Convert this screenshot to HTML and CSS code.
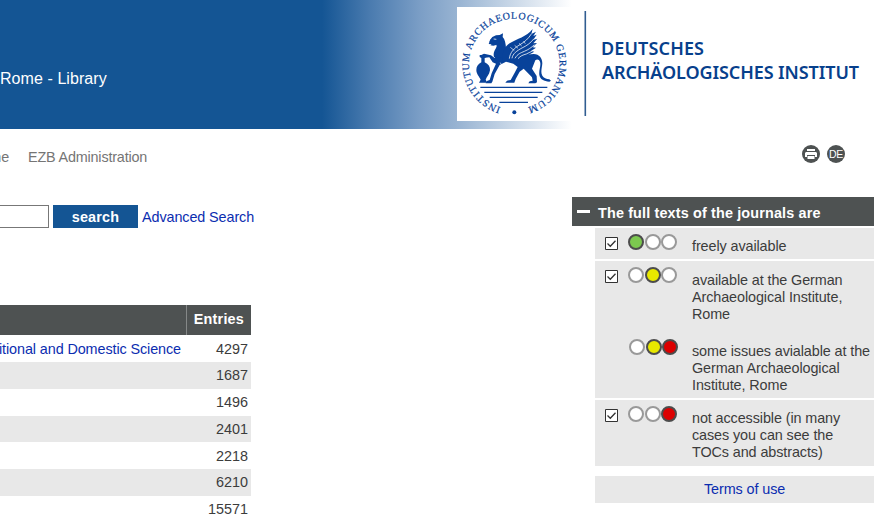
FILE: index.html
```html
<!DOCTYPE html>
<html lang="en">
<head>
<meta charset="utf-8">
<title>Rome - Library</title>
<link rel="stylesheet" href="styles.css">
</head>
<body>
<header class="banner">
  <h1 class="library">Rome - Library</h1>
  <svg class="logo" viewBox="0 0 417 114" role="img" aria-label="Deutsches Archäologisches Institut">
    <rect width="417" height="114" fill="#fff"/>
    <g transform="scale(.33333) translate(-21 -21)" fill="#08429a" stroke="none">
      <path id="ring" fill="none" d="M193 328a136 136 0 0 1 0-272a136 136 0 0 1 0 272"/>
      <text class="seal-text"><textPath href="#ring" startOffset="41" textLength="772">INSTITUTUM ARCHAEOLOGICUM GERMANICUM</textPath></text>
      <circle cx="193" cy="337" r="6"/>
      <path d="M89 165h20v6l-5 3v13c11 5 17 13 16 24-2 13-10 20-13 28l5 9H87l5-9c-4-9-13-17-13-29 0-10 5-18 15-23v-13l-5-3z"/>
      <path d="M118 127l5-10 8-3 14-2 9-5-1 12c9 8 9 19 14 28l13 14 25 4c18 2 31-3 46-3 17 1 26 12 26 28-1 14-6 27 0 37 4 7 12 10 21 11l5 4-5 3c-16-1-28-7-30-20-2-15 6-29 2-40-3-8-10-8-14-4l-10 25 14 22 1 19-5 3h-21l4-6 9-2-2-10-25-26-12 9-12 22-4 11h-27l5-6 11-2 12-22 9-17-13-10-22-6-19 10-15 27-7 23-3 5h-17l4-7 8-3 6-20 13-29-10-4-10-15-13 1-7-5-4 3v-6l8-4 21 5 11 8c2-10 8-14 10-22l-3-18-11 3-9-1 4-3-9-1z"/>
      <path d="M120 120l7-9 11-5 11-1 10-5-1 11c7 7 9 20 10 32l-6 32-30-4c-4-14 5-22 8-32l-3-14-11 3-8-1z"/>
      <path d="M157 185c-2-24 6-45 22-55 22-14 50-19 69-43l-4 15 14-7-8 13 10-4-10 15 12-3-12 14 11-1-13 13 10 1-15 10 10 2-17 9 8 4-19 7c-17 4-26 2-34-5l-17 9z"/>
      <g fill="none" stroke="#fff" stroke-width="2.3">
        <path d="M178 176c2-18 14-32 32-42 15-9 25-18 34-32M186 175c2-14 15-23 30-31 14-7 25-14 36-28M195 175c8-14 17-16 28-21 12-5 21-11 30-20M204 176c8-9 15-11 25-14l18-9M151 188c2 5 5 7 9 9"/>
        <path d="M181 142l12 10M194 136l10 9M207 130l8 8M220 124l6 7" stroke-width="2"/>
        <path d="M131 117l8 1"/>
      </g>
      <path fill="none" stroke="#08429a" stroke-width="4" d="M91 262h201M103 277h174M119 292h144M148 307h86"/>
    </g>
    <path d="M128.3 4v105" stroke="#315d91" stroke-width="1.6"/>
    <g class="institute">
      <text x="144" y="48" textLength="103">DEUTSCHES</text>
      <text x="145" y="72" textLength="257">ARCHÄOLOGISCHES INSTITUT</text>
    </g>
  </svg>
</header>

<nav class="nav">
  <span class="nav-home">Home</span>
  <span>EZB Administration</span>
  <span class="tools">
    <svg width="18" height="18" viewBox="0 0 18 18" aria-label="Print">
      <circle cx="9" cy="9" r="9" fill="#4e5252"/>
      <path d="M5 4h8v2H5zM4 7h10l1 1v4h-2v-2H5v2H3V8zM5.500 11h7v3h-7z" fill="#fff"/>
    </svg>
    <span class="language">DE</span>
  </span>
</nav>

<main class="main">
  <section class="browse">
    <form class="search">
      <input class="query" type="text" aria-label="Search">
      <button class="submit" type="button">search</button>
      <a class="advanced" href="#">Advanced Search</a>
    </form>
    <div class="table">
      <div class="row head"><span class="subject"></span><span class="count">Entries</span></div>
      <div class="row"><a class="subject" href="#">Nutritional and Domestic Science</a><span class="count">4297</span></div>
      <div class="row"><span class="subject"></span><span class="count">1687</span></div>
      <div class="row"><span class="subject"></span><span class="count">1496</span></div>
      <div class="row"><span class="subject"></span><span class="count">2401</span></div>
      <div class="row"><span class="subject"></span><span class="count">2218</span></div>
      <div class="row"><span class="subject"></span><span class="count">6210</span></div>
      <div class="row"><span class="subject"></span><span class="count">15571</span></div>
    </div>
  </section>

  <aside class="access">
    <h2 class="access-title"><span class="minus"></span>The full texts of the journals are</h2>
    <div class="group free">
      <div class="option">
        <svg class="check" viewBox="0 0 13 13"><path d="M.5.5h12v12H.5z" fill="#fff" stroke="#333"/><path d="M2.500 6.500l2.800 2.800 5.200-5.600" fill="none" stroke="#333" stroke-width="1.300"/></svg>
        <span class="lights"><i class="light green"></i><i class="light"></i><i class="light"></i></span>
        <span class="label">freely available</span>
      </div>
    </div>
    <div class="group licensed">
      <div class="option">
        <svg class="check" viewBox="0 0 13 13"><path d="M.5.5h12v12H.5z" fill="#fff" stroke="#333"/><path d="M2.500 6.500l2.800 2.800 5.200-5.600" fill="none" stroke="#333" stroke-width="1.300"/></svg>
        <span class="lights"><i class="light"></i><i class="light yellow"></i><i class="light"></i></span>
        <span class="label">available at the German<br>Archaeological Institute,<br>Rome</span>
      </div>
      <div class="option partial">
        <span class="check"></span>
        <span class="lights"><i class="light"></i><i class="light yellow"></i><i class="light red"></i></span>
        <span class="label">some issues avialable at the<br>German Archaeological<br>Institute, Rome</span>
      </div>
    </div>
    <div class="group closed">
      <div class="option">
        <svg class="check" viewBox="0 0 13 13"><path d="M.5.5h12v12H.5z" fill="#fff" stroke="#333"/><path d="M2.500 6.500l2.800 2.800 5.200-5.600" fill="none" stroke="#333" stroke-width="1.300"/></svg>
        <span class="lights"><i class="light"></i><i class="light"></i><i class="light red"></i></span>
        <span class="label">not accessible (in many<br>cases you can see the<br>TOCs and abstracts)</span>
      </div>
    </div>
    <a class="terms" href="#">Terms of use</a>
  </aside>
</main>
</body>
</html>
```
FILE: styles.css
```css
* { box-sizing: border-box; }
body {
  margin: 0;
  width: 874px;
  height: 520px;
  overflow: hidden;
  background: #fff;
  color: #3c3c3c;
  font: 14.4px/17px "Liberation Sans", Arial, sans-serif;
  letter-spacing: -.1px;
}
a { color: #0b2db0; text-decoration: none; }

.banner {
  display: flex;
  justify-content: space-between;
  height: 129px;
  padding-top: 7px;
  background: linear-gradient(90deg, #145594 322px, #4a7baf 370px, #7b9ec6 420px, #9ab5d3 460px, #fff 572px);
}
.library {
  margin: 63px 0 0;
  color: #fff;
  font-size: 16px;
  font-weight: normal;
  line-height: 18px;
  letter-spacing: .07px;
}
.logo { width: 417px; height: 114px; letter-spacing: 0; }
.seal-text { font: 30px "Liberation Serif", serif; stroke: #08429a; stroke-width: .6px; }
.institute { fill: #07408c; font: 600 18px "Noto Sans", sans-serif; }

.nav {
  display: flex;
  height: 68px;
  padding-top: 20px;
  color: #757575;
  letter-spacing: -.18px;
}
.nav-home {
  display: flex;
  justify-content: flex-end;
  width: 9px;
  margin-right: 19px;
}
.tools {
  display: flex;
  gap: 7px;
  margin: -4px 29px 0 auto;
}
.language {
  width: 18px;
  height: 18px;
  border-radius: 50%;
  background: #4e5252;
  color: #fff;
  font-size: 10.5px;
  line-height: 19px;
  text-align: center;
}

.main { display: flex; justify-content: space-between; }
.browse { width: 251px; padding-top: 8px; }
.search { display: flex; height: 24px; margin-bottom: 76px; line-height: 24px; }
.query {
  flex: none;
  width: 49px;
  height: 23px;
  margin: 0 4px 0 0;
  border: 1px solid #777;
  border-left: 0;
  background: #fff;
}
.submit {
  flex: none;
  width: 85px;
  height: 23px;
  margin-right: 4px;
  padding: 1px 0 0;
  border: 0;
  background: #145594;
  color: #fff;
  font: bold 14.4px/22px "Liberation Sans", sans-serif;
  letter-spacing: .2px;
}
.advanced { white-space: nowrap; }

.row {
  display: flex;
  height: 26.8px;
  line-height: 27.6px;
}
.row:nth-child(odd) { background: #e8e8e8; }
.row:nth-child(4n + 2) { line-height: 29px; }
.row.head {
  height: 30.2px;
  background: #4e5252;
  color: #fff;
  font-weight: bold;
  line-height: 29px;
  letter-spacing: .2px;
}
.subject {
  display: flex;
  justify-content: flex-end;
  width: 186px;
  padding-right: 5px;
  white-space: nowrap;
}
.count { width: 65px; padding-right: 3px; text-align: right; letter-spacing: 0; }
.head .count { padding-right: 7px; border-left: 1px solid #858888; letter-spacing: .2px; }

.access { width: 302px; }
.access-title {
  display: flex;
  height: 29px;
  margin: 0 0 2px;
  padding-left: 5px;
  background: #4e5252;
  color: #fff;
  font-size: 14.4px;
  line-height: 32px;
  letter-spacing: .15px;
}
.minus {
  width: 13px;
  height: 3px;
  margin: 13px 8px 0 0;
  background: #fff;
}
.group {
  margin: 0 0 2px 23px;
  padding-left: 10px;
  background: #e8e8e8;
}
.free { height: 31px; }
.licensed { height: 137px; }
.closed { height: 66px; }
.option { display: flex; padding-top: 6px; }
.check { width: 13px; height: 13px; margin: 3px 10px 0 0; }
.lights { display: flex; gap: .5px; width: 64px; }
.light {
  width: 16px;
  height: 16px;
  border: 2px solid #999;
  border-radius: 50%;
  background: #fff;
}
.green, .yellow, .red { border-color: #4c4c4c; }
.green { background: #7cc84f; }
.yellow { background: #e8e800; }
.red { background: #dc0000; }
.label { padding-top: 4px; white-space: nowrap; }
.licensed .label { padding-top: 5px; }
.licensed .partial .label { padding-top: 4px; }
.partial { padding-top: 16px; }
.partial .lights { padding-left: 1px; }
.terms {
  display: block;
  height: 27px;
  margin: 10px 0 0 23px;
  background: #e8e8e8;
  line-height: 27px;
  text-indent: 109px;
}
```
